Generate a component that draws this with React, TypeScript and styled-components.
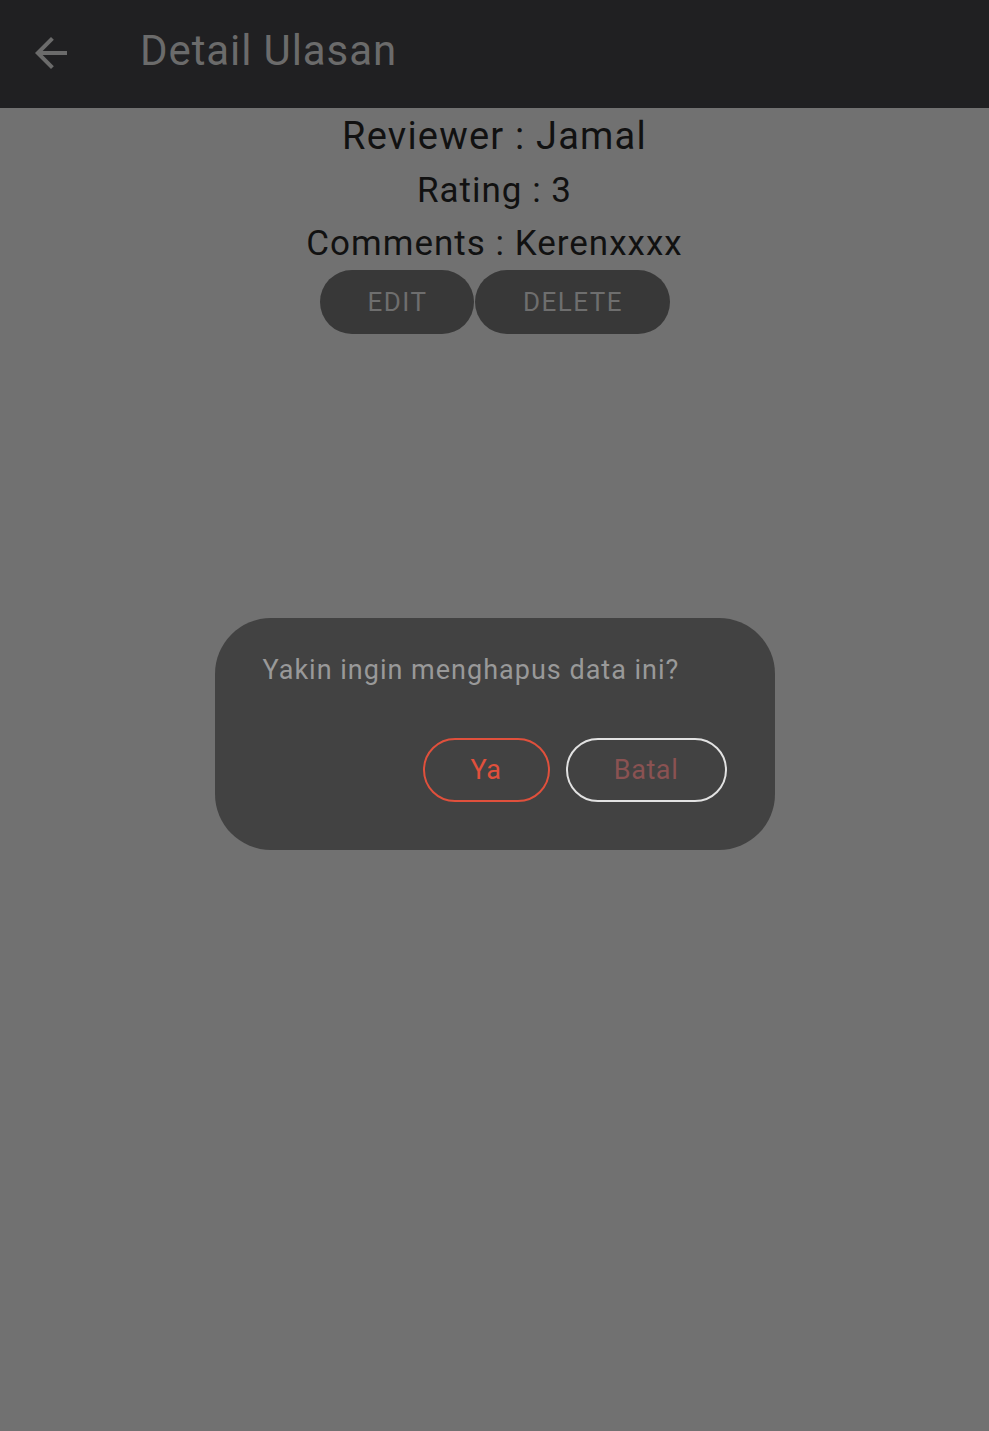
import React from "react";
import styled, { createGlobalStyle } from "styled-components";

const Global = createGlobalStyle`
  html, body { margin: 0; padding: 0; }
  body { font-family: Roboto, "Noto Sans", sans-serif; background: #717171; }
`;

const Page = styled.div`
  min-height: 1431px;
  background: #717171;
  display: flex;
  flex-direction: column;
`;

const AppBar = styled.header`
  height: 108px;
  background: #202022;
  display: flex;
  align-items: center;
  padding-left: 27px;
  box-sizing: border-box;
`;

const BackButton = styled.button`
  width: 48px;
  height: 48px;
  padding: 0;
  border: none;
  background: none;
  display: flex;
  align-items: center;
  justify-content: center;
  margin-right: 65px;
  margin-top: -3px;
`;

const Title = styled.h1`
  margin: 0;
  font-size: 42px;
  font-weight: 400;
  color: #6b6b6b;
  letter-spacing: 0.9px;
  line-height: 1;
  margin-top: -6px;
`;

const Content = styled.main`
  display: flex;
  flex-direction: column;
  align-items: center;
`;

const Line = styled.p<{ $size: number; $height: number; $spacing: number }>`
  margin: 0;
  font-size: ${(p) => p.$size}px;
  line-height: ${(p) => p.$height}px;
  letter-spacing: ${(p) => p.$spacing}px;
  color: #111111;
`;

const ButtonRow = styled.div`
  display: flex;
  gap: 1px;
`;

const PillButton = styled.button<{ $w: number }>`
  width: ${(p) => p.$w}px;
  height: 64px;
  border: none;
  border-radius: 32px;
  background: #383838;
  color: #6e6e6e;
  font-family: Roboto, sans-serif;
  font-size: 26px;
  letter-spacing: 1.5px;
  padding: 0 0 0 2px;
`;

const Overlay = styled.div`
  position: fixed;
  inset: 0;
  display: flex;
  justify-content: center;
  align-items: flex-start;
  padding-top: 618px;
  box-sizing: border-box;
`;

const Dialog = styled.div`
  width: 560px;
  height: 232px;
  box-sizing: border-box;
  background: #424242;
  border-radius: 56px;
  padding: 36px 48px 0 48px;
  display: flex;
  flex-direction: column;
`;

const Message = styled.p`
  margin: 0;
  font-size: 27px;
  line-height: 32px;
  letter-spacing: 1px;
  color: #999999;
`;

const Actions = styled.div`
  display: flex;
  justify-content: flex-end;
  gap: 16px;
  margin-top: 52px;
`;

const OutlineButton = styled.button<{ $w: number; $border: string; $color: string }>`
  width: ${(p) => p.$w}px;
  height: 64px;
  box-sizing: border-box;
  border: 2px solid ${(p) => p.$border};
  border-radius: 32px;
  background: transparent;
  color: ${(p) => p.$color};
  font-family: Roboto, sans-serif;
  font-size: 27px;
  letter-spacing: 0.6px;
  padding: 0;
`;

export default function App() {
  return (
    <>
      <Global />
      <Page>
        <AppBar>
          <BackButton aria-label="back">
            <svg width="48" height="48" viewBox="0 0 24 24">
              <path
                d="M20 11H7.83l5.59-5.59L12 4l-8 8 8 8 1.41-1.41L7.83 13H20v-2z"
                fill="#6b6b6b"
              />
            </svg>
          </BackButton>
          <Title>Detail Ulasan</Title>
        </AppBar>
        <Content>
          <Line $size={38} $height={56} $spacing={1.2}>Reviewer : Jamal</Line>
          <Line $size={35} $height={54} $spacing={1}>Rating : 3</Line>
          <Line $size={35} $height={52} $spacing={1}>Comments : Kerenxxxx</Line>
          <ButtonRow>
            <PillButton $w={154}>EDIT</PillButton>
            <PillButton $w={195}>DELETE</PillButton>
          </ButtonRow>
        </Content>
      </Page>
      <Overlay>
        <Dialog role="dialog">
          <Message>Yakin ingin menghapus data ini?</Message>
          <Actions>
            <OutlineButton $w={127} $border="#e0503c" $color="#e0503c">Ya</OutlineButton>
            <OutlineButton $w={161} $border="#e2e2e2" $color="#8a5252">Batal</OutlineButton>
          </Actions>
        </Dialog>
      </Overlay>
    </>
  );
}
